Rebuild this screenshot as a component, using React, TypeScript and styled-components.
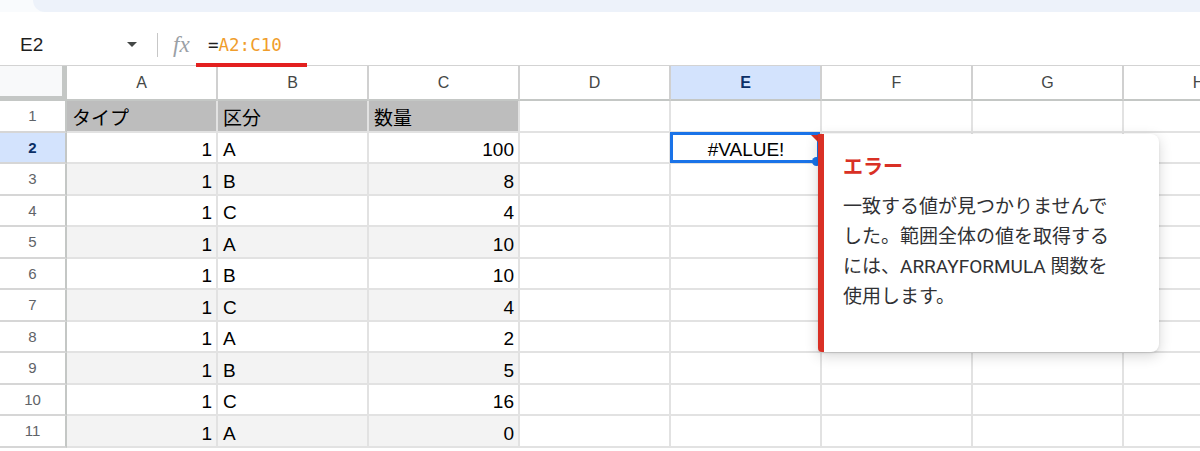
import styled, { createGlobalStyle } from 'styled-components';

const GlobalStyle = createGlobalStyle`
  html, body {
    margin: 0;
    padding: 0;
    background: #fff;
  }
  body {
    width: 1200px;
    height: 451px;
    overflow: hidden;
    font-family: 'Liberation Sans', 'Noto Sans CJK JP', sans-serif;
  }
`;

const COLUMNS = ['A', 'B', 'C', 'D', 'E', 'F', 'G', 'H'];

// タイプ / 区分 / 数量
const DATA: [number, string, number][] = [
  [1, 'A', 100],
  [1, 'B', 8],
  [1, 'C', 4],
  [1, 'A', 10],
  [1, 'B', 10],
  [1, 'C', 4],
  [1, 'A', 2],
  [1, 'B', 5],
  [1, 'C', 16],
  [1, 'A', 0],
];

const HEADERS = ['タイプ', '区分', '数量'];

function App() {
  const activeCol = 'E';
  const activeRow = 2;

  const renderRow = (rowNo: number) => {
    const record = rowNo >= 2 ? DATA[rowNo - 2] : null;
    const banded = rowNo >= 3 && rowNo % 2 === 1;
    const cells = COLUMNS.map((col, i) => {
      const key = `${col}${rowNo}`;
      if (col === activeCol && rowNo === activeRow) {
        return (
          <ActiveCell key={key} $align="center">
            #VALUE!
            <ErrorMark />
            <FillHandle />
            <ErrorPopup>
              <PopupTitle>エラー</PopupTitle>
              <PopupBody>
                一致する値が見つかりませんでした。範囲全体の値を取得するには、ARRAYFORMULA 関数を使用します。
              </PopupBody>
            </ErrorPopup>
          </ActiveCell>
        );
      }
      if (i > 2) return <Cell key={key} />;
      if (rowNo === 1) {
        return (
          <Cell key={key} $bg="#bdbdbd" $align="left">
            {HEADERS[i]}
          </Cell>
        );
      }
      const value = record ? record[i] : '';
      return (
        <Cell key={key} $bg={banded ? '#f3f3f3' : undefined} $align={i === 1 ? 'left' : 'right'}>
          {value}
        </Cell>
      );
    });
    return [
      <RowHead key={`r${rowNo}`} $active={rowNo === activeRow}>
        {rowNo}
      </RowHead>,
      ...cells,
    ];
  };

  return (
    <>
      <GlobalStyle />
      <Page>
        <TopStrip>
          <ToolbarEdge />
        </TopStrip>
        <FormulaBar>
          <NameBox>
            <span>E2</span>
            <Caret />
          </NameBox>
          <Divider />
          <FxLabel>fx</FxLabel>
          <FormulaInput>
            =<RangeRef>A2:C10</RangeRef>
          </FormulaInput>
        </FormulaBar>
        <Sheet>
          <Corner />
          {COLUMNS.map((c) => (
            <ColHead key={c} $active={c === activeCol}>
              {c}
            </ColHead>
          ))}
          {Array.from({ length: 11 }, (_, i) => renderRow(i + 1))}
        </Sheet>
      </Page>
    </>
  );
}

const Page = styled.div`
  width: 1200px;
  height: 451px;
  overflow: hidden;
  background: #fff;
`;

const TopStrip = styled.div`
  height: 12px;
  background: #f9fbfd;
  display: flex;
`;

const ToolbarEdge = styled.div`
  flex: 1;
  margin-left: 33px;
  background: #edf2fa;
  border-bottom-left-radius: 14px;
`;

const FormulaBar = styled.div`
  position: relative;
  z-index: 3;
  height: 54px;
  padding-top: 12px;
  display: flex;
  align-items: center;
  border-bottom: 1px solid #d3d3d3;
  box-sizing: border-box;
  background: #fff;
  color: #1f1f1f;
`;

const NameBox = styled.div`
  width: 117px;
  margin-left: 20px;
  display: flex;
  align-items: center;
  justify-content: space-between;
  font-size: 19px;
  color: #1f1f1f;
`;

const Caret = styled.span`
  width: 0;
  height: 0;
  border-left: 5px solid transparent;
  border-right: 5px solid transparent;
  border-top: 5px solid #444746;
`;

const Divider = styled.div`
  width: 1px;
  height: 24px;
  margin-left: 20px;
  background: #c7c7c7;
`;

const FxLabel = styled.span`
  margin-left: 15px;
  width: 22px;
  font-family: 'Liberation Serif', serif;
  font-style: italic;
  font-size: 23px;
  color: #9aa0a6;
`;

const FormulaInput = styled.span`
  position: relative;
  margin-left: 13px;
  font-family: 'DejaVu Sans Mono', 'Liberation Mono', monospace;
  font-size: 17.5px;
  line-height: 22px;
  color: #1f1f1f;

  &::after {
    content: '';
    position: absolute;
    left: -12px;
    right: -25px;
    bottom: -11px;
    height: 4px;
    background: #e3201f;
  }
`;

const RangeRef = styled.span`
  color: #f09d2c;
`;

const Sheet = styled.div`
  display: grid;
  grid-template-columns: 67px repeat(8, 151px);
  grid-template-rows: 35px repeat(11, 31.5px);
  width: 1200px;
  overflow: hidden;
`;

const Corner = styled.div`
  background: #f8f9fa;
  border-right: 5px solid #c4c7c5;
  border-bottom: 5px solid #c4c7c5;
  box-sizing: border-box;
`;

const ColHead = styled.div<{ $active?: boolean }>`
  display: flex;
  align-items: center;
  justify-content: center;
  box-sizing: border-box;
  border-right: 2px solid #d0d0d0;
  border-bottom: 2px solid #c4c7c5;
  background: ${(p) => (p.$active ? '#d3e3fd' : '#fff')};
  color: ${(p) => (p.$active ? '#0b2f66' : '#444746')};
  font-weight: ${(p) => (p.$active ? 700 : 400)};
  font-size: 16px;
`;

const RowHead = styled.div<{ $active?: boolean }>`
  display: flex;
  align-items: center;
  justify-content: center;
  box-sizing: border-box;
  border-right: 2px solid #c4c7c5;
  border-bottom: 2px solid #d6d6d6;
  background: ${(p) => (p.$active ? '#d3e3fd' : '#fff')};
  color: ${(p) => (p.$active ? '#0b2f66' : '#5f6368')};
  font-weight: ${(p) => (p.$active ? 700 : 400)};
  font-size: 15px;
`;

const Cell = styled.div<{ $bg?: string; $align?: 'left' | 'right' | 'center' }>`
  display: flex;
  align-items: flex-end;
  justify-content: ${(p) =>
    p.$align === 'right' ? 'flex-end' : p.$align === 'center' ? 'center' : 'flex-start'};
  box-sizing: border-box;
  padding: 0 4px 1px 5px;
  border-right: 2px solid #e2e2e2;
  border-bottom: 2px solid #e2e2e2;
  background: ${(p) => p.$bg ?? '#fff'};
  color: #000;
  font-size: 19px;
  line-height: 22px;
  white-space: nowrap;
`;

const ActiveCell = styled(Cell)`
  position: relative;
  overflow: visible;
  z-index: 2;

  &::before {
    content: '';
    position: absolute;
    inset: -1px 0 -1px -1px;
    border: 3px solid #1a73e8;
    pointer-events: none;
  }
`;

const ErrorMark = styled.span`
  position: absolute;
  top: 2px;
  right: 1px;
  width: 0;
  height: 0;
  border-top: 8px solid #d93025;
  border-left: 8px solid transparent;
`;

const FillHandle = styled.span`
  position: absolute;
  right: -1px;
  bottom: -4px;
  width: 9px;
  height: 9px;
  border-radius: 50%;
  background: #1a73e8;
`;

const ErrorPopup = styled.div`
  position: absolute;
  left: calc(100% - 2px);
  top: 1px;
  z-index: 3;
  width: 341px;
  height: 218px;
  box-sizing: border-box;
  padding: 19px 40px 0 19px;
  background: #fff;
  border-left: 6px solid #d93025;
  border-radius: 0 8px 8px 4px;
  box-shadow: 0 4px 14px rgba(0, 0, 0, 0.16), 0 1px 3px rgba(0, 0, 0, 0.08);
  white-space: normal;
  text-align: left;
  font-family: Roboto, 'Noto Sans CJK JP', sans-serif;
`;

const PopupTitle = styled.div`
  font-size: 20px;
  line-height: 28px;
  font-weight: 700;
  color: #d93025;
`;

const PopupBody = styled.p`
  margin: 11px 0 0;
  font-size: 19px;
  line-height: 30px;
  color: #303134;
`;

export default App;
